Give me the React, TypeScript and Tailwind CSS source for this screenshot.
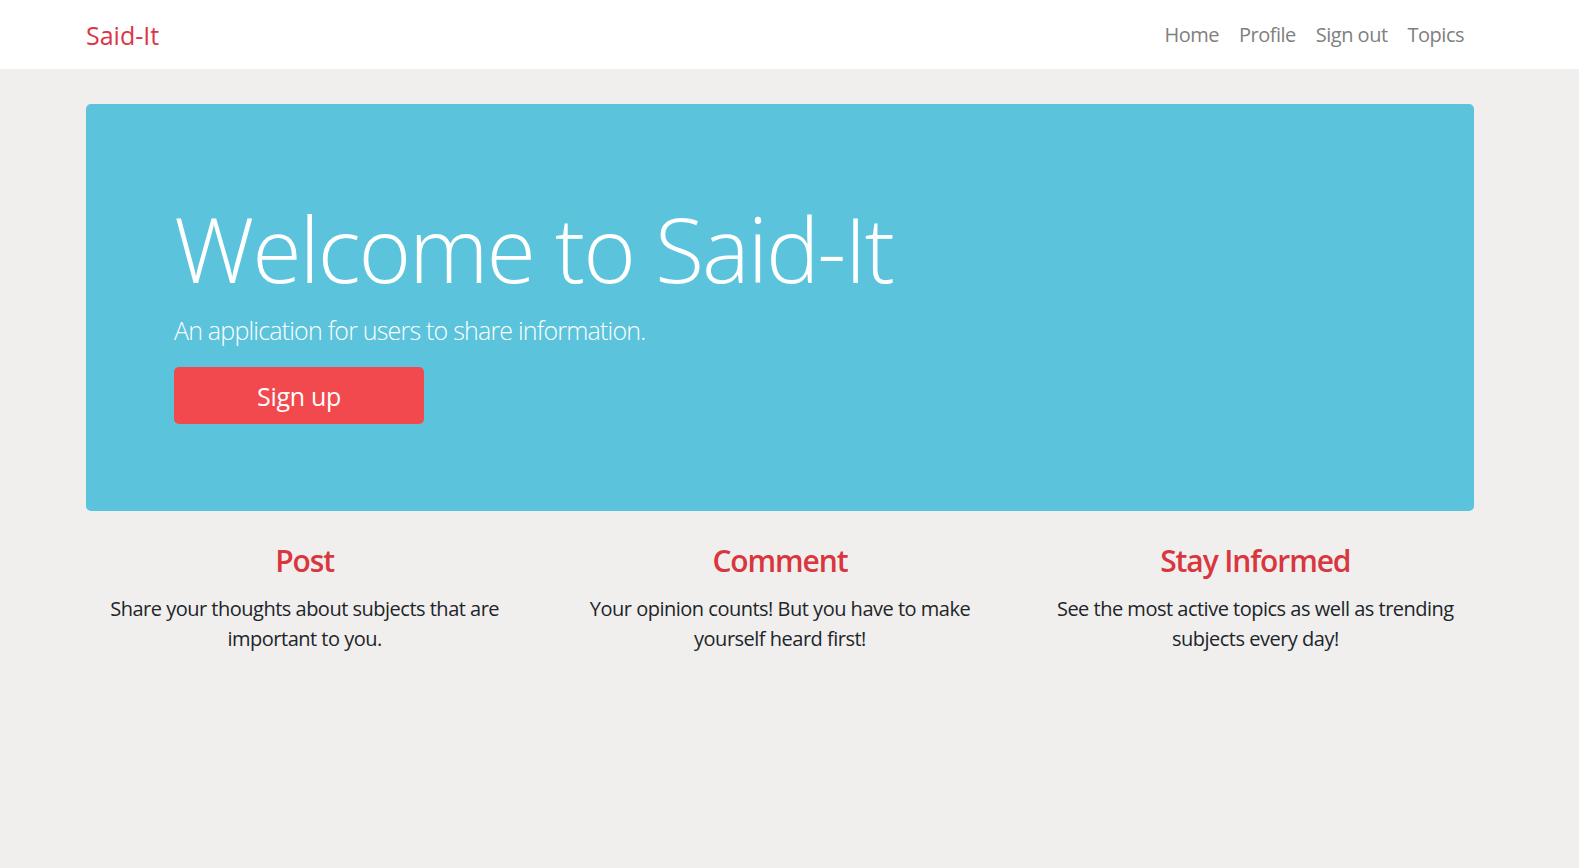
// Said-It landing page: navbar, hero jumbotron and three feature columns.

const font = "font-['Open_Sans','Segoe_UI','Liberation_Sans',sans-serif]";

const features = [
  {
    title: "Post",
    text: "Share your thoughts about subjects that are important to you.",
  },
  {
    title: "Comment",
    text: "Your opinion counts! But you have to make yourself heard first!",
  },
  {
    title: "Stay Informed",
    text: "See the most active topics as well as trending subjects every day!",
  },
];

function Navbar() {
  return (
    <nav className="bg-white h-[69px]">
      <div className="w-[1388px] ml-[86px] h-full flex items-center justify-between">
        <a href="#" className="text-[25px] text-[#dc3545] leading-none pt-[2px]">
          Said-It
        </a>
        <ul className="flex items-center">
          {["Home", "Profile", "Sign out", "Topics"].map((l) => (
            <li key={l}>
              <a href="#" className="block px-[10px] text-[20px] text-[#808080] leading-[30px] tracking-[-0.5px]">
                {l}
              </a>
            </li>
          ))}
        </ul>
      </div>
    </nav>
  );
}

export default function App() {
  return (
    <div className={`${font} min-h-screen bg-[#f0efee] text-[#212529]`}>
      <Navbar />
      <main className="w-[1388px] ml-[86px] pt-[35px]">
        <section className="bg-[#5bc4dc] rounded-[5px] h-[407px] pl-[88px] pt-[90px]">
          <h1 className="text-[90px] font-light leading-[108px] text-white tracking-[-2.1px]">
            Welcome to Said-It
          </h1>
          <p className="mt-[10px] text-[25px] font-light leading-[37.5px] text-white tracking-[-0.8px]">
            An application for users to share information.
          </p>
          <button className="mt-[17px] w-[250px] h-[57px] pt-[3px] rounded-[5px] bg-[#f2494f] text-white text-[25px] tracking-[-0.3px]">
            Sign up
          </button>
        </section>
        <div className="grid grid-cols-3 -mx-[19px] pt-[32px]">
          {features.map((f) => (
            <div key={f.title} className="px-[19px] text-center">
              <h3 className="text-[30px] font-semibold leading-[36px] text-[#d9363e] tracking-[-1.1px]">{f.title}</h3>
              <p className="mt-[15px] text-[20px] leading-[30px] tracking-[-0.5px]">{f.text}</p>
            </div>
          ))}
        </div>
      </main>
    </div>
  );
}
